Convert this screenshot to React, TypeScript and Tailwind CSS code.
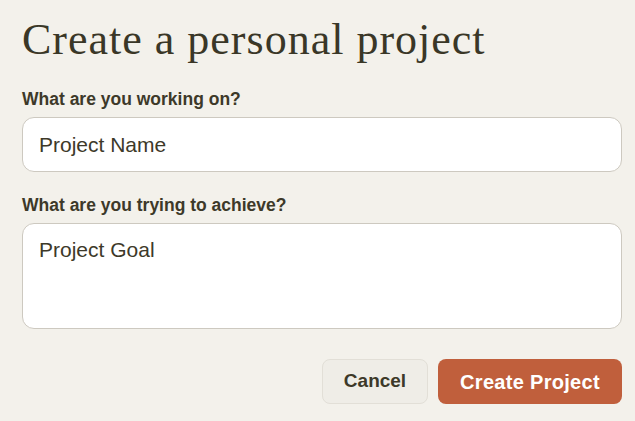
import React from "react";

export default function App() {
  return (
    <div
      className="min-h-screen w-full bg-[#f3f1eb] pl-[22px] pr-[13px] pt-[18px] text-[#3d3929]"
      style={{ fontFamily: '"Liberation Sans", Arial, sans-serif' }}
    >
      <h1
        className="text-[44px] leading-[44px] font-normal tracking-[1px] text-[#3a3727]"
        style={{ fontFamily: '"Liberation Serif", "Times New Roman", serif' }}
      >
        Create a personal project
      </h1>

      <form className="mt-[25px] flex flex-col" onSubmit={(e) => e.preventDefault()}>
        <label className="text-[17.5px] leading-[24px] font-bold">What are you working on?</label>
        <input
          type="text"
          placeholder="Project Name"
          className="mt-[6px] h-[55px] w-full rounded-[12px] border border-[#cdc9c0] bg-white px-[16px] text-[21px] text-[#3d3929] outline-none placeholder:text-[#3d3929]"
        />

        <label className="mt-[21px] text-[17.5px] leading-[24px] font-bold">
          What are you trying to achieve?
        </label>
        <textarea
          placeholder="Project Goal"
          className="mt-[6px] h-[106px] w-full resize-none rounded-[12px] border border-[#cdc9c0] bg-white px-[16px] pt-[12px] text-[21px] leading-[28px] text-[#3d3929] outline-none placeholder:text-[#3d3929]"
        />

        <div className="mt-[30px] flex justify-end gap-[10px]">
          <button
            type="button"
            className="flex h-[45px] w-[106px] items-center justify-center rounded-[8px] border border-[#e2dfd7] bg-[#efede7] text-[19px] font-bold text-[#3d3929]"
          >
            Cancel
          </button>
          <button
            type="submit"
            className="flex h-[45px] w-[184px] items-center justify-center rounded-[8px] bg-[#c05f3c] text-[20px] font-bold tracking-[0.3px] text-white"
          >
            Create Project
          </button>
        </div>
      </form>
    </div>
  );
}
